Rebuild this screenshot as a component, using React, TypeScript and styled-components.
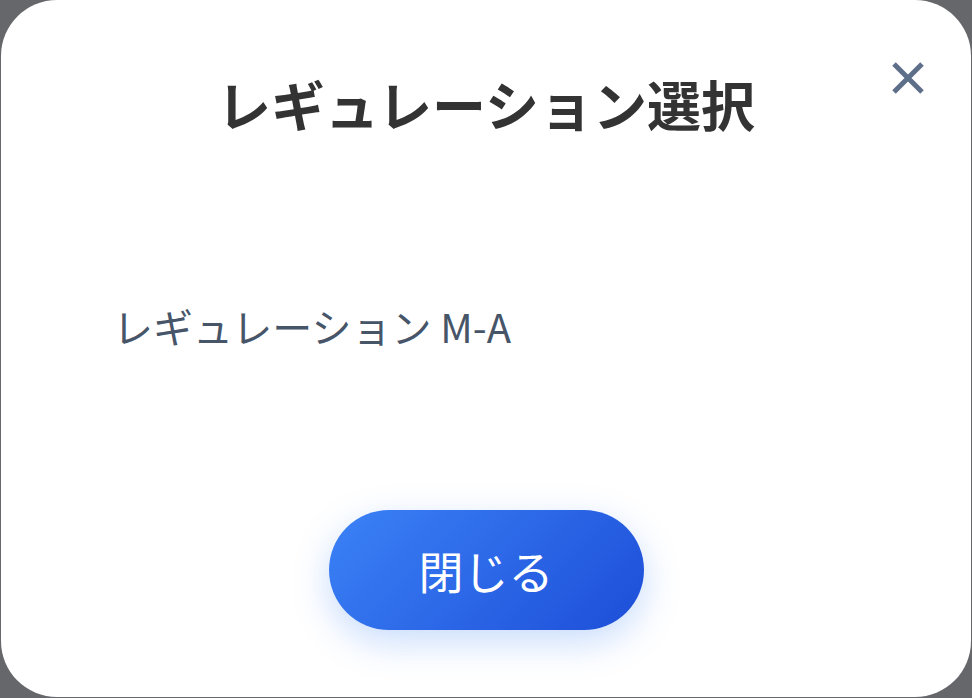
import React from "react";
import styled, { createGlobalStyle } from "styled-components";

const GlobalStyle = createGlobalStyle`
  html, body {
    margin: 0;
    padding: 0;
    background: #66676b;
    font-family: "Noto Sans CJK JP", "Noto Sans", sans-serif;
  }
  * { box-sizing: border-box; }
`;

const Backdrop = styled.div`
  width: 972px;
  height: 698px;
  background: #66676b;
  display: flex;
  justify-content: center;
  align-items: flex-start;
  overflow: hidden;
`;

const Dialog = styled.div`
  position: relative;
  width: 970px;
  height: 697px;
  background: #ffffff;
  border-radius: 56px;
  display: flex;
  flex-direction: column;
  align-items: center;
  padding: 66px 112px 67px;
`;

const Title = styled.h2`
  margin: 0;
  font-size: 54px;
  font-weight: 700;
  line-height: 1.4;
  color: #333333;
  text-align: center;
`;

const CloseButton = styled.button`
  position: absolute;
  top: 60px;
  right: 45px;
  width: 36px;
  height: 36px;
  padding: 0;
  border: none;
  background: transparent;
  display: flex;
  align-items: center;
  justify-content: center;
  cursor: pointer;
`;

const Body = styled.div`
  flex: 1;
  width: 100%;
  display: flex;
  align-items: center;
`;

const OptionText = styled.p`
  margin: 0;
  font-size: 40px;
  font-weight: 400;
  line-height: 1.4;
  color: #475569;
`;

const PrimaryButton = styled.button`
  width: 315px;
  height: 120px;
  border: none;
  border-radius: 60px;
  background: linear-gradient(135deg, #3b82f6 0%, #1d4ed8 100%);
  box-shadow: 0 12px 36px rgba(59, 130, 246, 0.28);
  color: #ffffff;
  font-family: "Noto Sans CJK JP", "Noto Sans", sans-serif;
  font-size: 45px;
  font-weight: 400;
  cursor: pointer;
`;

function CloseIcon() {
  return (
    <svg width="32" height="32" viewBox="0 0 32 32">
      <path d="M2 2 L30 30 M30 2 L2 30" stroke="#5e6f89" strokeWidth="5" fill="none" />
    </svg>
  );
}

export default function App() {
  return (
    <>
      <GlobalStyle />
      <Backdrop>
        <Dialog>
          <CloseButton aria-label="閉じる">
            <CloseIcon />
          </CloseButton>
          <Title>レギュレーション選択</Title>
          <Body>
            <OptionText>レギュレーション M-A</OptionText>
          </Body>
          <PrimaryButton>閉じる</PrimaryButton>
        </Dialog>
      </Backdrop>
    </>
  );
}
